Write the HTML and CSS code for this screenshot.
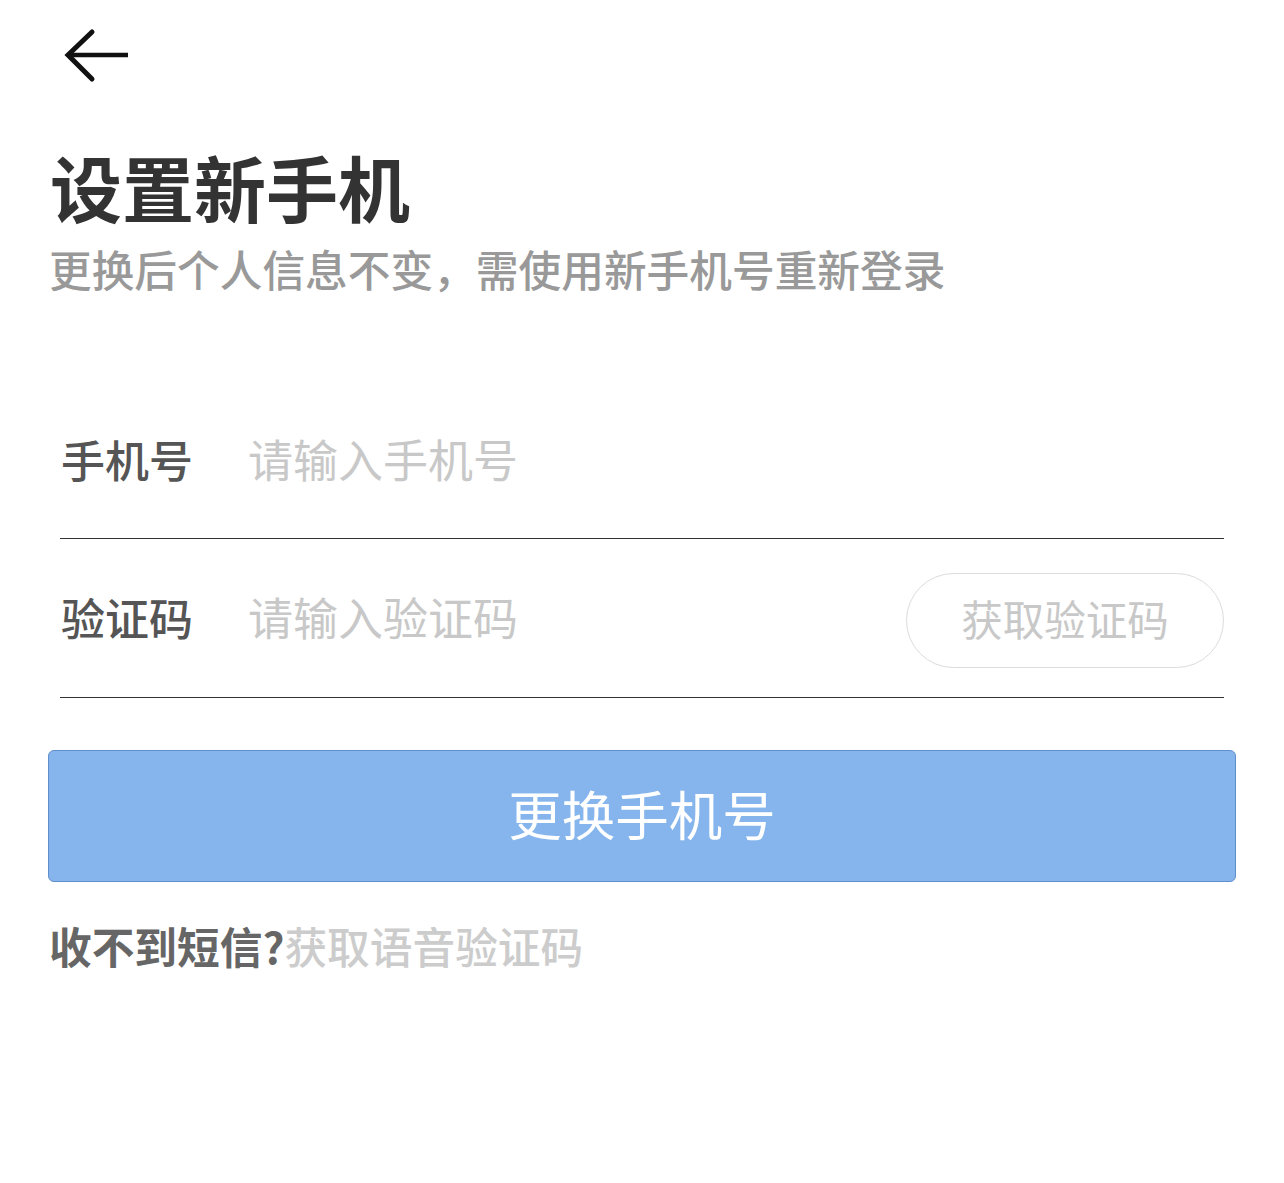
FILE: index.html
```html
<!DOCTYPE html>
<html lang="zh-CN">
<head>
<meta charset="utf-8">
<title>设置新手机</title>
<link rel="stylesheet" href="styles.css">
</head>
<body>
<div class="page">
  <div class="topbar">
    <svg class="back" width="80" height="64" viewBox="0 0 80 64">
      <path d="M8 31 H68" stroke="#111" stroke-width="4.5" fill="none" stroke-linecap="butt"/>
      <path d="M32 8 L8 31 L32 55" stroke="#111" stroke-width="5" fill="none" stroke-linecap="round" stroke-linejoin="miter"/>
    </svg>
  </div>
  <h1 class="title">设置新手机</h1>
  <p class="subtitle">更换后个人信息不变，需使用新手机号重新登录</p>

  <div class="form">
    <div class="row">
      <span class="label">手机号</span>
      <span class="placeholder">请输入手机号</span>
    </div>
    <div class="row">
      <span class="label">验证码</span>
      <span class="placeholder">请输入验证码</span>
      <span class="code-btn">获取验证码</span>
    </div>
  </div>

  <div class="submit">更换手机号</div>

  <p class="help"><span class="help-q">收不到短信?</span><span class="help-link">获取语音验证码</span></p>
</div>
</body>
</html>
```

FILE: styles.css
```css
html, body {
  margin: 0;
  padding: 0;
  background: #fff;
}
body {
  font-family: "Noto Sans CJK SC", "Noto Sans", sans-serif;
  width: 1284px;
  height: 1183px;
  overflow: hidden;
}
.page {
  padding: 0 48px 0 50px;
}
.topbar {
  height: 150px;
  position: relative;
}
.back {
  display: block;
  position: relative;
  left: 10px;
  top: 24px;
}
.title {
  margin: 0;
  font-size: 72px;
  line-height: 72px;
  font-weight: 700;
  color: #333;
}
.subtitle {
  margin: 24px 0 0 -1px;
  font-size: 42.7px;
  line-height: 44px;
  font-weight: 500;
  color: #999;
}
.form {
  margin: 91px 12px 0 10px;
}
.row {
  height: 158px;
  border-bottom: 1px solid #333;
  display: flex;
  align-items: center;
  padding-left: 1px;
}
.row:first-child {
  height: 157px;
}
.label {
  font-size: 44px;
  line-height: 44px;
  font-weight: 500;
  color: #555;
  width: 187px;
  margin-top: -2px;
}
.placeholder {
  font-size: 45px;
  line-height: 44px;
  color: #c8c8c8;
  flex: 1;
  margin-top: -2px;
}
.code-btn {
  box-sizing: border-box;
  width: 318px;
  height: 95px;
  border: 1.5px solid #dcdcdc;
  border-radius: 48px;
  display: flex;
  align-items: center;
  justify-content: center;
  font-size: 41.5px;
  color: #c8c8c8;
  margin-top: 4px;
  padding-bottom: 4px;
}
.submit {
  margin-top: 52px;
  box-sizing: border-box;
  height: 132px;
  margin-left: -2px;
  background: #85b5ec;
  border: 1.5px solid #5f8fcb;
  border-radius: 6px;
  display: flex;
  align-items: center;
  justify-content: center;
  color: #fff;
  font-size: 53.5px;
  line-height: 53px;
  padding-bottom: 7px;
}
.help {
  margin: 42px 0 0 -1px;
  font-size: 42.7px;
  line-height: 42px;
}
.help-q {
  color: #666;
  font-weight: 700;
}
.help-link {
  color: #ccc;
  font-weight: 500;
}
```
